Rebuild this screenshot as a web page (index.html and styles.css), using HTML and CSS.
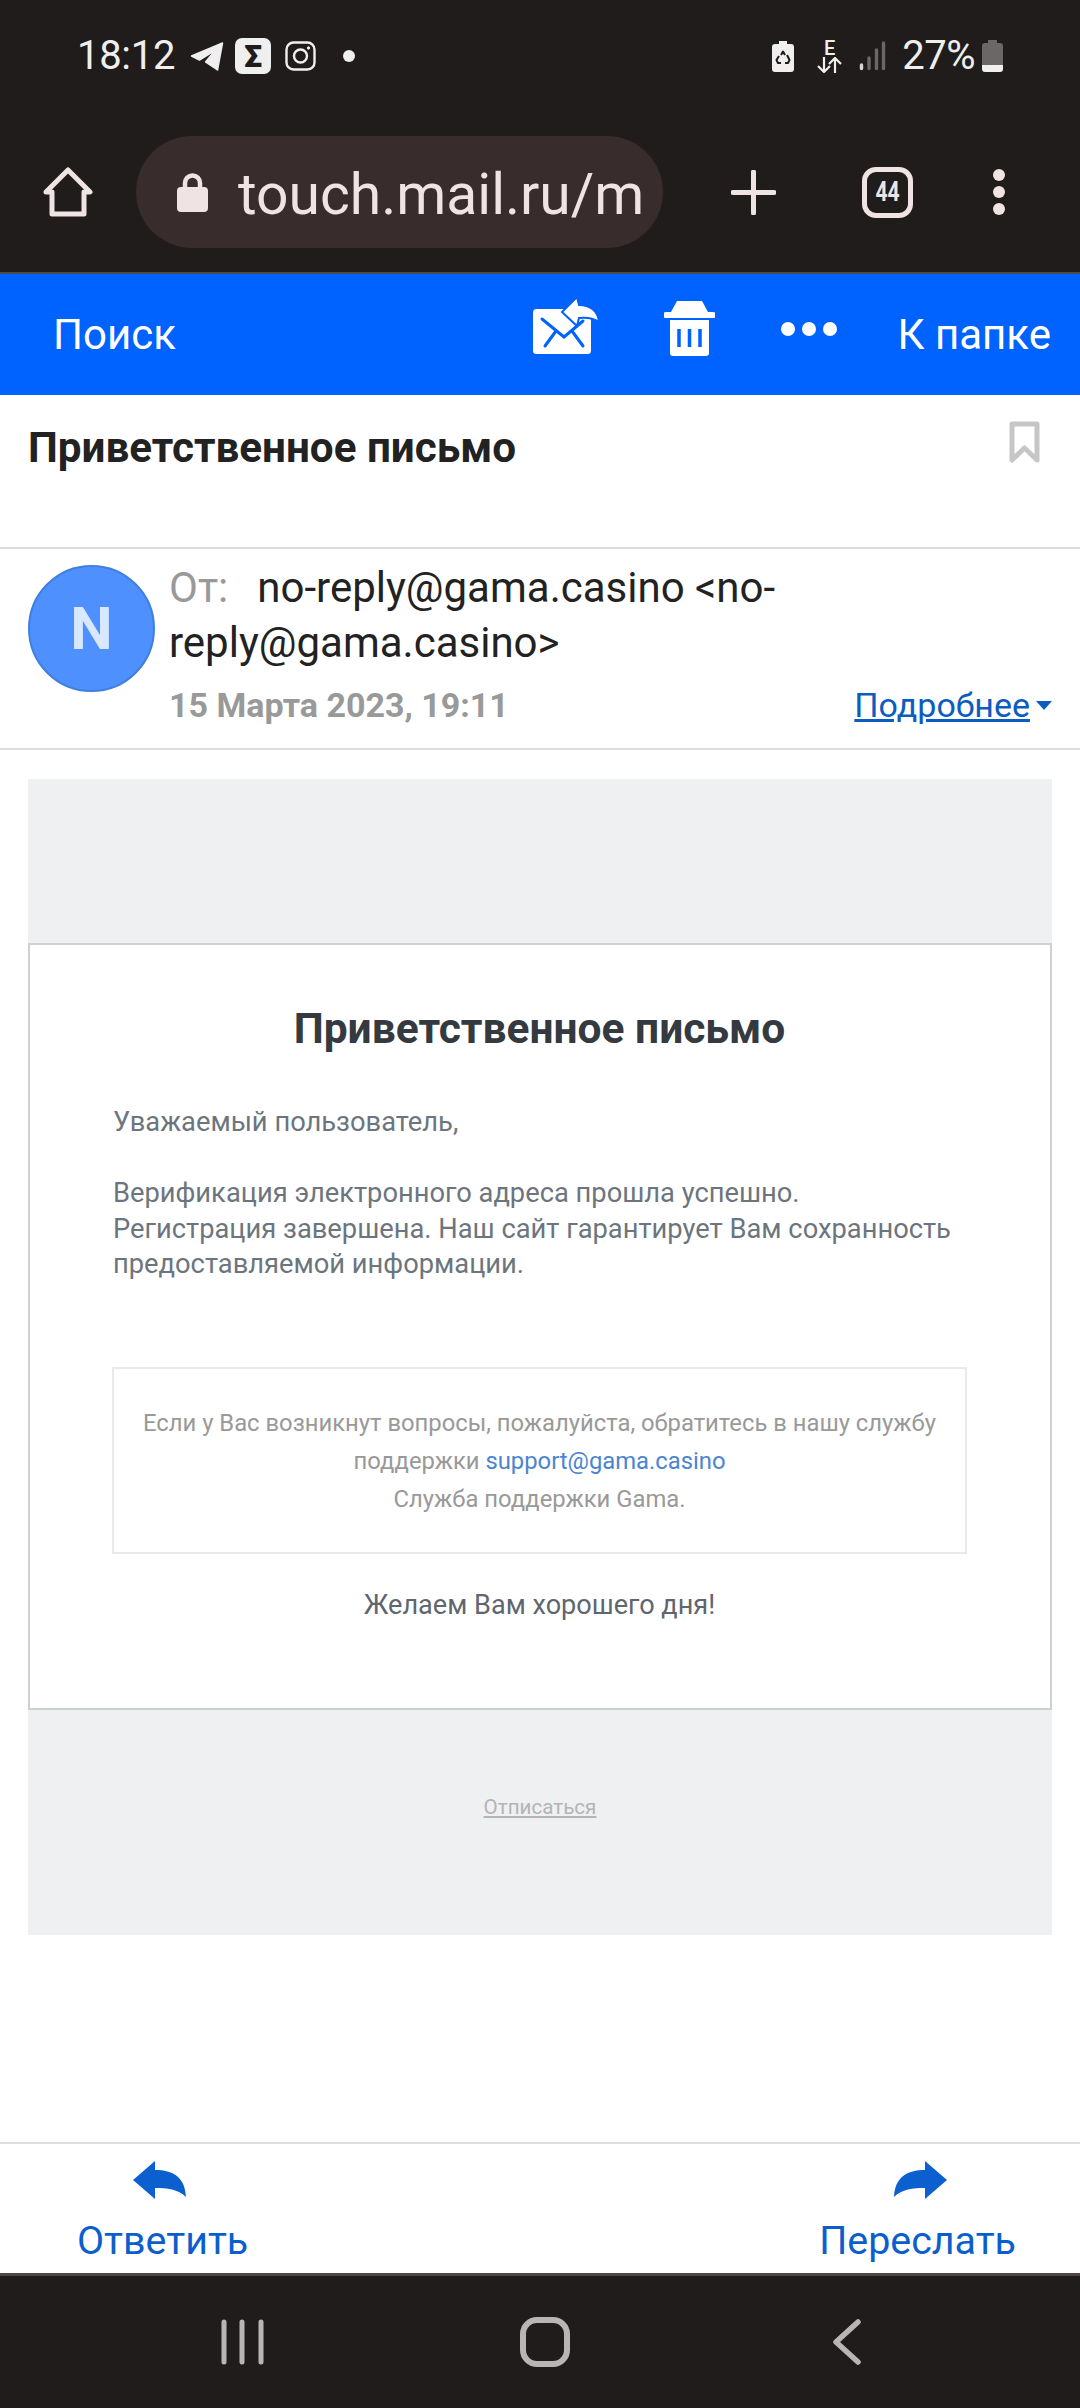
FILE: index.html
```html
<!DOCTYPE html>
<html lang="ru">
<head>
<meta charset="utf-8">
<title>Приветственное письмо</title>
<link rel="stylesheet" href="styles.css">
</head>
<body>
<div class="page">
  <header class="chrome">
    <div class="status">
      <div class="status-left">
        <span class="time">18:12</span>
        <svg class="ic-tg" viewBox="0 0 33 29"><path d="M1 14 32 1 27 28 15 20 25 8 9 18Z" fill="#efefef" stroke="#efefef" stroke-width="1.5" stroke-linejoin="round"/></svg>
        <span class="sigma">Σ</span>
        <svg class="ic-ig" viewBox="0 0 31 30" fill="none" stroke="#efefef" stroke-width="2.4"><rect x="1.5" y="1.5" width="28" height="27" rx="7"/><circle cx="15.5" cy="15" r="6.5"/><circle cx="23.5" cy="7" r="1.2" fill="#efefef" stroke-width="1"/></svg>
        <span class="dot"></span>
      </div>
      <div class="status-right">
        <svg class="ic-saver" viewBox="0 0 22 31"><path d="M7 0h8v3h4a3 3 0 0 1 3 3v22a3 3 0 0 1-3 3H3a3 3 0 0 1-3-3V6a3 3 0 0 1 3-3h4Z" fill="#efefef"/><path d="M9 14l2-3.500 2 3.500M15 14l2.500 5-1.500 3h-3M9 22H6l-1.500-3 2.500-4" fill="none" stroke="#211c1c" stroke-width="2" stroke-linejoin="round"/></svg>
        <div class="net">
          <span class="net-e">E</span>
          <svg class="ic-arrows" viewBox="0 0 25 16" fill="none" stroke="#efefef" stroke-width="2.2"><path d="M7 0v14M1 9l6 6 6-6M18 16V2M12 7l6-6 6 6"/></svg>
        </div>
        <svg class="ic-signal" viewBox="0 0 27 30" fill="none" stroke-linecap="round" stroke-width="3.4"><path d="M2.5 24v3.5" stroke="#d8d6d6"/><path d="M10 17v10.500M17.500 9v18.500M24.500 2v25.500" stroke="#6b6766"/></svg>
        <span class="pct">27%</span>
        <svg class="ic-batt" viewBox="0 0 21 32"><path d="M6 0h9v3h3a3 3 0 0 1 3 3v19H0V6a3 3 0 0 1 3-3h3Z" fill="#6b6766"/><path d="M0 25h21v4a3 3 0 0 1-3 3H3a3 3 0 0 1-3-3Z" fill="#efefef"/></svg>
      </div>
    </div>
    <div class="toolbar">
      <svg class="ic-home" viewBox="0 0 50 50" fill="none" stroke="#efe4e3" stroke-width="5" stroke-linejoin="round"><path d="M25 3 47 25H41V47H9V25H3Z"/></svg>
      <div class="url">
        <svg class="ic-lock" viewBox="0 0 31 39"><path d="M8 16V10a7.500 7.500 0 0 1 15 0v6" fill="none" stroke="#efe4e3" stroke-width="4.500"/><rect y="14" width="31" height="25" rx="4" fill="#efe4e3"/></svg>
        <span class="url-text">touch.mail.ru/m</span>
      </div>
      <svg class="ic-plus" viewBox="0 0 45 45" stroke="#efe4e3" stroke-width="5" stroke-linecap="round"><path d="M22.500 2v41M2 22.500h41"/></svg>
      <div class="tabs"><span class="tabs-count">44</span></div>
      <div class="kebab"><span></span><span></span><span></span></div>
    </div>
  </header>

  <nav class="bluebar">
    <span class="bb-link bb-search">Поиск</span>
    <svg class="ic-mail" viewBox="0 0 66 62"><rect x="0" y="15" width="58" height="45" rx="3.500" fill="#fff"/><path d="M9 25 31 43 50 27M12 52 23 37M50 52 39 37" fill="none" stroke="#0062ff" stroke-width="3" stroke-linecap="round"/><path d="M29 18 44 3 46 11C56 11 65 16 66 28 60 24 53 23 46 24L44 32Z" fill="#fff" stroke="#0062ff" stroke-width="2"/></svg>
    <svg class="ic-trash" viewBox="0 0 51 55"><path d="M13 0H38L44 11H49A2.500 2.500 0 0 1 49 17H2A2.500 2.500 0 0 1 2 11H7Z" fill="#fff"/><path d="M6 19H45V52a3 3 0 0 1-3 3H9a3 3 0 0 1-3-3Z" fill="#fff"/><path d="M15 28V46M25.500 28V46M36 28V46" stroke="#0062ff" stroke-width="3.500"/></svg>
    <div class="bb-more"><span></span><span></span><span></span></div>
    <span class="bb-link bb-folder">К папке</span>
  </nav>

  <section class="subject">
    <h1 class="subject-title">Приветственное письмо</h1>
    <svg class="ic-bookmark" viewBox="0 0 31 43" fill="none" stroke="#c6c6c6" stroke-width="5" stroke-linejoin="round"><path d="M3 3H28V39L15.500 27 3 39Z"/></svg>
  </section>

  <section class="meta">
    <div class="avatar">N</div>
    <div class="meta-body">
      <div class="from"><span class="from-label">От:</span><span class="from-addr">no-reply@gama.casino &lt;no-reply@gama.casino&gt;</span></div>
      <div class="meta-row">
        <span class="date">15 Марта 2023, 19:11</span>
        <span class="more"><a class="more-link">Подробнее</a><i class="caret"></i></span>
      </div>
    </div>
  </section>

  <main class="content">
    <div class="mail">
      <div class="card">
        <h2 class="card-title">Приветственное письмо</h2>
        <p class="card-text greet">Уважаемый пользователь,</p>
        <p class="card-text">Верификация электронного адреса прошла успешно.<br>Регистрация завершена. Наш сайт гарантирует Вам сохранность предоставляемой информации.</p>
        <div class="support">Если у Вас возникнут вопросы, пожалуйста, обратитесь в нашу службу поддержки <a class="support-link">support@gama.casino</a><br>Служба поддержки Gama.</div>
        <p class="wish">Желаем Вам хорошего дня!</p>
      </div>
      <div class="unsub"><a class="unsub-link">Отписаться</a></div>
    </div>
  </main>

  <footer class="actions">
    <div class="action action-reply">
      <svg class="ic-action" viewBox="0 0 53 38"><path d="M22 0V9C40 9 52 16 53 36 45 28 34 27 22 27V38L0 19Z" fill="#0b5fcf"/></svg>
      <span>Ответить</span>
    </div>
    <div class="action action-fwd">
      <svg class="ic-action" viewBox="0 0 53 38"><path d="M31 0V9C13 9 1 16 0 36 8 28 19 27 31 27V38L53 19Z" fill="#0b5fcf"/></svg>
      <span>Переслать</span>
    </div>
  </footer>

  <div class="navbar">
    <svg class="ic-recents" viewBox="0 0 44 46" stroke="#b8b5b5" stroke-width="5" stroke-linecap="round"><path d="M3 3V43M21 3V43M40 3V43"/></svg>
    <svg class="ic-homebtn" viewBox="0 0 50 50" fill="none" stroke="#b8b5b5" stroke-width="6"><rect x="3" y="3" width="44" height="44" rx="14"/></svg>
    <svg class="ic-back" viewBox="0 0 28 46" fill="none" stroke="#b8b5b5" stroke-width="5.500" stroke-linecap="round" stroke-linejoin="round"><path d="M25 3 3 23 25 43" /></svg>
  </div>
</div>
</body>
</html>
```

FILE: styles.css
```css
* { box-sizing: border-box; }
html, body { margin: 0; padding: 0; }
body { font-family: Roboto, "Liberation Sans", sans-serif; background: #fff; }
.page { width: 1080px; height: 2408px; display: flex; flex-direction: column; overflow: hidden; }

/* Browser chrome */
.chrome { height: 274px; background: #211c1c; border-bottom: 2px solid #4f4a4a; flex: none; }
.status { height: 112px; display: flex; justify-content: space-between; align-items: center; padding: 0 77px 0 77px; }
.status-left, .status-right { display: flex; align-items: center; }
.time { font-size: 40px; color: #efefef; line-height: 40px; letter-spacing: -0.3px; margin-right: 15px; }
.ic-tg { width: 34px; height: 29px; margin-right: 11px; }
.sigma { width: 36px; height: 36px; border-radius: 7px; background: #efefef; color: #211c1c; font-size: 32px; font-weight: 900; line-height: 36px; text-align: center; margin-right: 14px; }
.ic-ig { width: 31px; height: 30px; margin-right: 27px; }
.dot { width: 12px; height: 12px; border-radius: 50%; background: #efefef; }
.ic-saver { width: 22px; height: 31px; margin-right: 23px; }
.net { width: 25px; display: flex; flex-direction: column; align-items: center; margin-right: 17px; }
.net-e { font-size: 20px; line-height: 17px; font-weight: 500; color: #efefef; }
.ic-arrows { width: 25px; height: 16px; }
.ic-signal { width: 27px; height: 30px; margin-right: 16px; }
.pct { font-size: 40px; line-height: 40px; color: #efefef; letter-spacing: -0.5px; margin-right: 7px; }
.ic-batt { width: 21px; height: 32px; }

.toolbar { height: 160px; display: flex; align-items: center; }
.ic-home { width: 50px; height: 50px; margin-left: 43px; margin-right: 43px; flex: none; }
.url { width: 527px; height: 112px; flex: none; border-radius: 56px; background: #382c2c; display: flex; align-items: center; padding: 0 10px 0 41px; }
.ic-lock { width: 31px; height: 39px; flex: none; margin-right: 30px; }
.url-text { font-size: 57px; line-height: 70px; margin-top: 6px; color: #efe4e3; white-space: nowrap; }
.ic-plus { width: 45px; height: 45px; margin-left: 68px; flex: none; }
.tabs { width: 51px; height: 51px; border: 5px solid #efe4e3; border-radius: 14px; margin-left: 86px; color: #efe4e3; font-size: 27px; font-weight: 700; line-height: 41px; text-align: center; }
.tabs-count { display: inline-block; transform: scaleX(0.78); }
.kebab { display: flex; flex-direction: column; gap: 5px; margin-left: 80px; }
.kebab span { width: 12px; height: 12px; border-radius: 50%; background: #efe4e3; }

/* Blue mail toolbar */
.bluebar { height: 121px; background: #0062ff; flex: none; display: flex; align-items: flex-start; color: #fff; }
.bb-link { font-size: 42px; line-height: 48px; margin-top: 37px; white-space: nowrap; }
.bb-search { margin-left: 53px; margin-right: auto; }
.ic-mail { width: 66px; height: 62px; margin-top: 20px; }
.ic-trash { width: 51px; height: 55px; margin-top: 27px; margin-left: 65px; }
.bb-more { display: flex; gap: 7px; margin-top: 48px; margin-left: 66px; }
.bb-more span { width: 14px; height: 14px; border-radius: 50%; background: #fff; }
.bb-folder { margin-left: 61px; margin-right: 29px; }

/* Subject */
.subject { height: 154px; flex: none; border-bottom: 2px solid #ddd; display: flex; justify-content: space-between; align-items: flex-start; padding: 0 40px 0 28px; }
.subject-title { margin: 28px 0 0; font-size: 42.200px; line-height: 50px; font-weight: 700; color: #222; }
.ic-bookmark { width: 31px; height: 43px; margin-top: 26px; }

/* Sender */
.meta { height: 201px; flex: none; border-bottom: 2px solid #ddd; display: flex; padding: 16px 28px 0; }
.avatar { width: 127px; height: 127px; border-radius: 50%; background: #4d90fe; border: 2px solid #3f7fdf; color: #d9e8ff; font-size: 60px; font-weight: 700; line-height: 123px; text-align: center; flex: none; }
.meta-body { margin-left: 14px; flex: 1; min-width: 0; margin-top: -5px; }
.from { font-size: 42px; line-height: 55px; color: #222; }
.from-label { color: #999; margin-right: 29px; }
.meta-row { display: flex; justify-content: space-between; align-items: baseline; margin-top: 8px; line-height: 55px; }
.date { font-size: 34px; font-weight: 700; color: #999; }
.more { display: flex; align-items: center; font-size: 34px; color: #0d5cc0; }
.more-link { text-decoration: underline; }
.caret { width: 0; height: 0; border-left: 8px solid transparent; border-right: 8px solid transparent; border-top: 9px solid #0d5cc0; margin-left: 6px; }

/* Message body */
.content { flex: 1; min-height: 0; padding: 29px 28px 0; }
.mail { background: #eff0f2; padding-top: 164px; height: 1156px; }
.card { background: #fff; border: 2px solid #cfd0d0; height: 767px; padding: 0 83px 0 82px; }
.card-title { margin: 59px 0 0; text-align: center; font-size: 42.500px; line-height: 50px; font-weight: 700; color: #343a40; }
.card-text { margin: 0 0 0 1px; font-size: 27.300px; line-height: 35.500px; color: #6c757d; }
.greet { margin-top: 51px; margin-bottom: 35.500px; }
.support { margin-top: 84px; height: 187px; border: 2px solid #e9e9e9; padding: 35px 20px 0; text-align: center; font-size: 23.800px; line-height: 38px; color: #999; }
.support-link { color: #4a86cf; }
.wish { margin: 33px 0 0; text-align: center; font-size: 27.100px; line-height: 36px; color: #5f666d; }
.unsub { text-align: center; margin-top: 83px; font-size: 20.600px; line-height: 28px; color: #b4b4b4; }
.unsub-link { text-decoration: underline; }

/* Reply / forward */
.actions { height: 131px; flex: none; border-top: 2px solid #ddd; background: #fff; display: flex; justify-content: space-between; padding: 17px 64px 0 77px; font-size: 39.400px; color: #0b5fcc; }
.action { display: flex; flex-direction: column; align-items: center; }
.action span { line-height: 48px; margin-top: 18px; }
.ic-action { width: 53px; height: 38px; }
.action-reply .ic-action { margin-right: 6px; }
.action-fwd .ic-action { margin-left: 6px; }

/* Android nav */
.navbar { flex: none; height: 135px; background: #211c1c; border-top: 3px solid #4f4545; display: flex; align-items: flex-start; padding: 41px 0 0 221px; }
.ic-recents { width: 44px; height: 46px; margin-top: 2px; }
.ic-homebtn { width: 50px; height: 50px; margin-left: 255px; }
.ic-back { width: 28px; height: 46px; margin-left: 263px; margin-top: 2px; }
```
